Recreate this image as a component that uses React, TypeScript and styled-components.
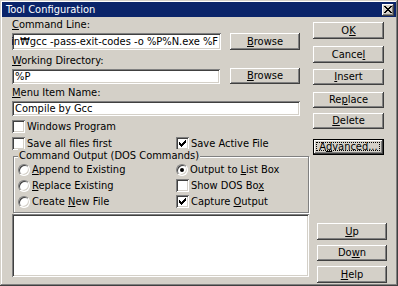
import React from "react";
import styled, { createGlobalStyle } from "styled-components";

const Global = createGlobalStyle`
  html, body { margin: 0; padding: 0; background: #d4d0c8; }
  body {
    font-family: "DejaVu Sans Condensed", "Liberation Sans", Arial, sans-serif;
    font-size: 11px;
    color: #000;
  }
  u { text-decoration: underline; text-underline-offset: 1px; }
`;

const Window = styled.div`
  box-sizing: border-box;
  width: 398px;
  height: 286px;
  padding: 2px;
  background: #d4d0c8;
  box-shadow: inset -1px -1px #404040, inset 1px 1px #d4d0c8,
    inset -2px -2px #808080, inset 2px 2px #fff;
  display: flex;
  flex-direction: column;
  overflow: hidden;
`;

const TitleBar = styled.div`
  height: 15px;
  flex: none;
  background: #0a246a;
  color: #fff;
  display: flex;
  align-items: center;
  justify-content: space-between;
  padding: 0 2px 0 4px;
  line-height: 15px;
`;

const CloseBtn = styled.div`
  box-sizing: border-box;
  width: 12px;
  height: 12px;
  background: #d4d0c8;
  box-shadow: inset -1px -1px #404040, inset 1px 1px #fff,
    inset -2px -2px #808080;
  display: flex;
  align-items: center;
  justify-content: center;
`;

const Body = styled.div`
  display: flex;
  flex: 1;
`;

const LeftCol = styled.div`
  width: 298px;
  margin-left: 10px;
  display: flex;
  flex-direction: column;
`;

const RightCol = styled.div`
  display: flex;
  flex-direction: column;
  margin-left: 3px;
`;

const Label = styled.div<{ $mt: number }>`
  height: 14px;
  line-height: 14px;
  margin-top: ${(p) => p.$mt}px;
  white-space: nowrap;
`;

const FieldRow = styled.div<{ $mt: number; $h: number }>`
  display: flex;
  align-items: flex-start;
  margin-top: ${(p) => p.$mt}px;
  height: ${(p) => p.$h}px;
`;

const Field = styled.div<{ $w: number; $h: number; $scrolled?: boolean }>`
  box-sizing: border-box;
  width: ${(p) => p.$w}px;
  height: ${(p) => p.$h}px;
  background: #fff;
  box-shadow: inset 1px 1px #808080, inset -1px -1px #fff,
    inset 2px 2px #404040, inset -2px -2px #d4d0c8;
  padding: ${(p) => (p.$scrolled ? "0 3px 0 2px" : "0 2px 0 3px")};
  line-height: ${(p) => p.$h}px;
  white-space: nowrap;
  overflow: hidden;
  display: flex;
  justify-content: ${(p) => (p.$scrolled ? "flex-end" : "flex-start")};
`;

const FieldText = styled.span`
  flex: none;
`;

const Button = styled.div<{
  $mt: number;
  $w: number;
  $h: number;
  $ml?: number;
  $default?: boolean;
}>`
  position: relative;
  box-sizing: border-box;
  flex: none;
  width: ${(p) => p.$w}px;
  height: ${(p) => p.$h}px;
  margin-top: ${(p) => p.$mt}px;
  margin-left: ${(p) => p.$ml ?? 0}px;
  background: #d4d0c8;
  box-shadow: ${(p) =>
    p.$default
      ? "inset 0 0 0 1px #000, inset -2px -2px #404040, inset 2px 2px #fff, inset -3px -3px #808080"
      : "inset -1px -1px #404040, inset 1px 1px #fff, inset -2px -2px #808080, inset 2px 2px #d4d0c8"};
  display: flex;
  align-items: center;
  justify-content: center;
  line-height: 12px;
  white-space: nowrap;
`;

const FocusRing = styled.span`
  position: absolute;
  left: 3px;
  top: 3px;
  right: 4px;
  bottom: 4px;
  border: 1px dotted #000;
  pointer-events: none;
`;

const CheckRow = styled.div<{ $mt: number }>`
  display: flex;
  height: 13px;
  margin-top: ${(p) => p.$mt}px;
  align-items: center;
`;

const OptionCell = styled.div<{ $w?: number }>`
  display: flex;
  align-items: center;
  gap: 2px;
  height: 13px;
  width: ${(p) => (p.$w ? `${p.$w}px` : "auto")};
  white-space: nowrap;
  line-height: 13px;
`;

const Box = styled.div`
  box-sizing: border-box;
  width: 13px;
  height: 13px;
  flex: none;
  background: #fff;
  box-shadow: inset 1px 1px #808080, inset -1px -1px #fff,
    inset 2px 2px #404040, inset -2px -2px #d4d0c8;
  display: flex;
  align-items: center;
  justify-content: center;
`;

const Radio = styled.div`
  box-sizing: border-box;
  width: 12px;
  height: 12px;
  flex: none;
  border-radius: 50%;
  background: #fff;
  border: 1px solid;
  border-color: #808080 #fff #fff #808080;
  box-shadow: inset 1px 1px #404040, inset -1px -1px #d4d0c8;
  display: flex;
  align-items: center;
  justify-content: center;
`;

const Dot = styled.div`
  width: 4px;
  height: 4px;
  border-radius: 50%;
  background: #000;
`;

const Group = styled.div`
  position: relative;
  box-sizing: border-box;
  width: 296px;
  height: 57px;
  margin-top: 6px;
  margin-left: 1px;
  border: 1px solid #808080;
  box-shadow: inset 1px 1px #fff, 1px 1px #fff;
  padding: 6px 0 0 4px;
  display: grid;
  grid-template-columns: 158px 1fr;
  grid-auto-rows: 13px;
  row-gap: 3px;
`;

const Legend = styled.span`
  position: absolute;
  left: 4px;
  top: -8px;
  padding: 0 1px;
  background: #d4d0c8;
  line-height: 14px;
  white-space: nowrap;
`;

const ListBox = styled.div`
  box-sizing: border-box;
  width: 297px;
  height: 63px;
  margin-top: 1px;
  background: #fff;
  box-shadow: inset 1px 1px #808080, inset -1px -1px #fff,
    inset 2px 2px #404040, inset -2px -2px #d4d0c8;
`;

const Check = () => (
  <svg width="7" height="7" viewBox="0 0 7 7">
    <path d="M0 2h1v1h1v1h1V3h1V2h1V1h1V0h1v3H6v1H5v1H4v1H3v1H2V6H1V5H0z" fill="#000" />
  </svg>
);

const CloseGlyph = () => (
  <svg width="8" height="7" viewBox="0 0 8 7">
    <path
      d="M0 0h2v1h1v1h2V1h1V0h2v1H7v1H6v1H5v1h1v1h1v1h1v1H6V6H5V5H3v1H2v1H0V6h1V5h1V4h1V3H2V2H1V1H0z"
      fill="#000"
    />
  </svg>
);

export default function App() {
  return (
    <>
      <Global />
      <Window>
        <TitleBar>
          <span>Tool Configuration</span>
          <CloseBtn>
            <CloseGlyph />
          </CloseBtn>
        </TitleBar>
        <Body>
          <LeftCol>
            <Label $mt={1}>
              <u>C</u>ommand Line:
            </Label>
            <FieldRow $mt={1} $h={17}>
              <Field $w={209} $h={17} $scrolled>
                <FieldText>in₩gcc -pass-exit-codes -o %P%N.exe %F</FieldText>
              </Field>
              <Button $mt={0} $ml={9} $w={70} $h={17}>
                <span>
                  <u>B</u>rowse
                </span>
              </Button>
            </FieldRow>
            <Label $mt={4}>
              <u>W</u>orking Directory:
            </Label>
            <FieldRow $mt={1} $h={15}>
              <Field $w={208} $h={15}>
                <FieldText>%P</FieldText>
              </Field>
              <Button $mt={-1} $ml={10} $w={70} $h={16}>
                <span>
                  <u>B</u>rowse
                </span>
              </Button>
            </FieldRow>
            <Label $mt={2}>
              <u>M</u>enu Item Name:
            </Label>
            <FieldRow $mt={1} $h={15}>
              <Field $w={288} $h={15}>
                <FieldText>Compile by Gcc</FieldText>
              </Field>
            </FieldRow>
            <CheckRow $mt={4}>
              <OptionCell>
                <Box />
                <span>Windows Program</span>
              </OptionCell>
            </CheckRow>
            <CheckRow $mt={4}>
              <OptionCell $w={164}>
                <Box />
                <span>Save all files first</span>
              </OptionCell>
              <OptionCell>
                <Box>
                  <Check />
                </Box>
                <span>Save Active File</span>
              </OptionCell>
            </CheckRow>
            <Group>
              <Legend>Command Output (DOS Commands)</Legend>
              <OptionCell>
                <Radio />
                <span>
                  <u>A</u>ppend to Existing
                </span>
              </OptionCell>
              <OptionCell>
                <Radio>
                  <Dot />
                </Radio>
                <span>
                  Output to <u>L</u>ist Box
                </span>
              </OptionCell>
              <OptionCell>
                <Radio />
                <span>
                  <u>R</u>eplace Existing
                </span>
              </OptionCell>
              <OptionCell>
                <Box />
                <span>
                  Show DOS Bo<u>x</u>
                </span>
              </OptionCell>
              <OptionCell>
                <Radio />
                <span>
                  Create <u>N</u>ew File
                </span>
              </OptionCell>
              <OptionCell>
                <Box>
                  <Check />
                </Box>
                <span>
                  Capture <u>O</u>utput
                </span>
              </OptionCell>
            </Group>
            <ListBox />
          </LeftCol>
          <RightCol>
            <Button $mt={5} $w={71} $h={17}>
              <span>
                O<u>K</u>
              </span>
            </Button>
            <Button $mt={7} $w={71} $h={17}>
              <span>
                Cance<u>l</u>
              </span>
            </Button>
            <Button $mt={6} $w={71} $h={16}>
              <span>
                <u>I</u>nsert
              </span>
            </Button>
            <Button $mt={7} $w={71} $h={16}>
              <span>
                Re<u>p</u>lace
              </span>
            </Button>
            <Button $mt={5} $w={71} $h={16}>
              <span>
                <u>D</u>elete
              </span>
            </Button>
            <Button $mt={10} $w={71} $h={16} $default>
              <FocusRing />
              <span>
                A<u>d</u>vanced...
              </span>
            </Button>
            <Button $mt={68} $ml={4} $w={70} $h={17}>
              <span>
                <u>U</u>p
              </span>
            </Button>
            <Button $mt={5} $ml={4} $w={70} $h={16}>
              <span>
                Do<u>w</u>n
              </span>
            </Button>
            <Button $mt={5} $ml={4} $w={70} $h={17}>
              <span>
                <u>H</u>elp
              </span>
            </Button>
          </RightCol>
        </Body>
      </Window>
    </>
  );
}
